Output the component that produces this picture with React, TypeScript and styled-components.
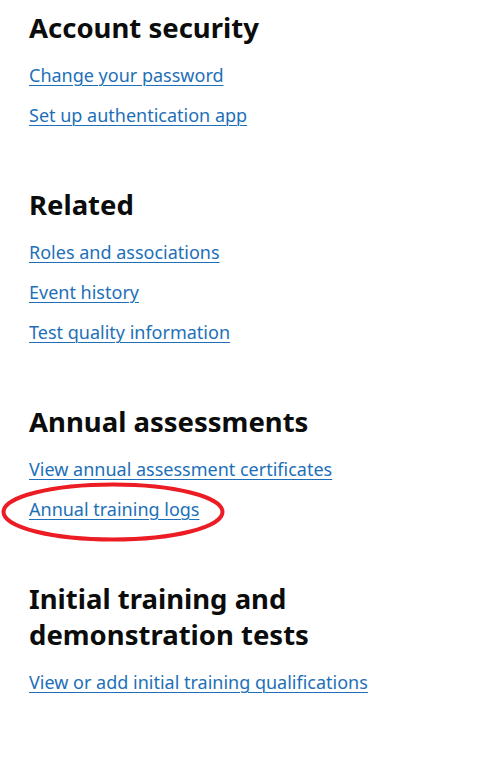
import styled, { createGlobalStyle } from "styled-components";

const GlobalStyle = createGlobalStyle`
  html, body {
    margin: 0;
    padding: 0;
    background: #ffffff;
  }
  body {
    font-family: "Noto Sans", Lato, Arial, sans-serif;
    color: #0b0c0c;
  }
`;

const Page = styled.main`
  position: relative;
  padding: 10px 29px 20px;
  width: 380px;
`;

const Section = styled.section`
  margin-bottom: 59px;

  &:last-child {
    margin-bottom: 0;
  }
`;

const Heading = styled.h2`
  margin: 0 0 17px;
  font-size: 27.5px;
  line-height: 36px;
  font-weight: 700;
  color: #0b0c0c;
`;

const LinkList = styled.ul`
  list-style: none;
  margin: 0;
  padding: 0;
`;

const Item = styled.li`
  margin-bottom: 15px;
  font-size: 18px;
  line-height: 25px;

  &:last-child {
    margin-bottom: 0;
  }
`;

const Link = styled.a`
  position: relative;
  color: #1d70b8;
  text-decoration: underline;
  text-decoration-thickness: 1px;
  text-underline-offset: 3px;
`;

const Circle = styled.svg`
  position: absolute;
  left: -29px;
  top: -17px;
  width: 226px;
  height: 64px;
  overflow: visible;
  pointer-events: none;
`;

const sections = [
  {
    title: "Account security",
    links: ["Change your password", "Set up authentication app"],
  },
  {
    title: "Related",
    links: ["Roles and associations", "Event history", "Test quality information"],
  },
  {
    title: "Annual assessments",
    links: ["View annual assessment certificates", "Annual training logs"],
  },
  {
    title: "Initial training and demonstration tests",
    links: ["View or add initial training qualifications"],
  },
];

export default function App() {
  return (
    <>
      <GlobalStyle />
      <Page>
        {sections.map((s) => (
          <Section key={s.title}>
            <Heading>{s.title}</Heading>
            <LinkList>
              {s.links.map((l) => (
                <Item key={l}>
                  <Link href="#">
                    {l}
                    {l === "Annual training logs" && (
                      <Circle viewBox="0 0 226 64">
                        <ellipse
                          cx="113"
                          cy="32"
                          rx="109.5"
                          ry="27.5"
                          fill="none"
                          stroke="#ec1c24"
                          strokeWidth="4"
                        />
                      </Circle>
                    )}
                  </Link>
                </Item>
              ))}
            </LinkList>
          </Section>
        ))}
      </Page>
    </>
  );
}
